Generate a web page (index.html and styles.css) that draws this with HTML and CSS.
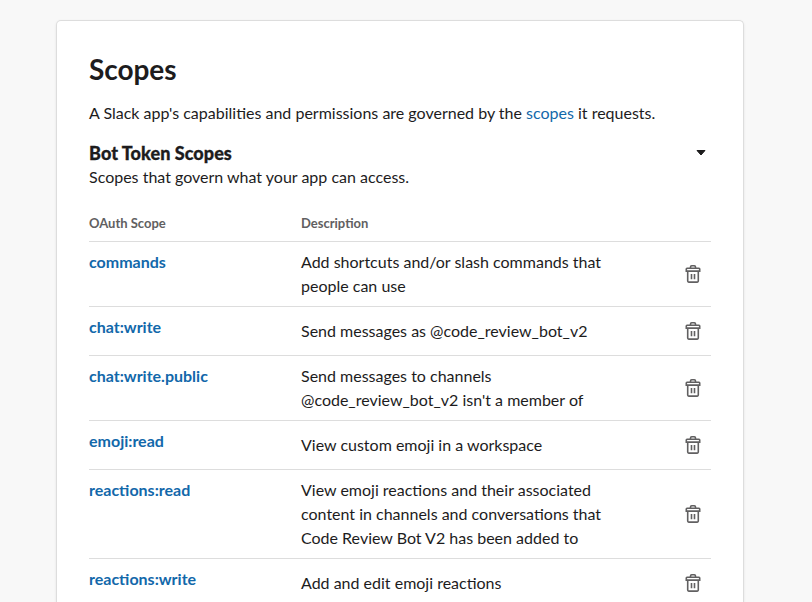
FILE: index.html
```html
<!DOCTYPE html>
<html lang="en">
<head>
<meta charset="utf-8">
<title>Scopes</title>
<link rel="stylesheet" href="styles.css">
</head>
<body>
<svg class="defs" aria-hidden="true"><symbol id="trash" viewBox="0 0 16 18"><path d="M5.5 3V2q0-1.2 1.2-1.2h2.6q1.2 0 1.2 1.2v1M2 3.3h12q.7 0 .7.7v2.1H1.3V4q0-.7.7-.7zM2.7 6.5v9.6q0 1 1 1h8.6q1 0 1-1V6.5M6.5 9v5.2M9.5 9v5.2" fill="none" stroke="#616061" stroke-width="1.6"/></symbol></svg>
<main class="card">
  <h1>Scopes</h1>
  <p class="intro">A Slack app's capabilities and permissions are governed by the <a href="#">scopes</a> it requests.</p>
  <div class="section-head"><h2>Bot Token Scopes</h2><svg class="caret" viewBox="0 0 10 6"><path d="M1 .5h8L5 5z" fill="#1d1c1d" stroke="#1d1c1d" stroke-linejoin="round"/></svg></div>
  <p class="sub">Scopes that govern what your app can access.</p>
  <div class="row head"><span>OAuth Scope</span><span>Description</span></div>
  <div class="row"><a href="#">commands</a><p>Add shortcuts and/or slash commands that people can use</p><svg class="trash"><use href="#trash"/></svg></div>
  <div class="row"><a href="#">chat:write</a><p>Send messages as @code_review_bot_v2</p><svg class="trash"><use href="#trash"/></svg></div>
  <div class="row"><a href="#">chat:write.public</a><p>Send messages to channels @code_review_bot_v2 isn't a member of</p><svg class="trash"><use href="#trash"/></svg></div>
  <div class="row"><a href="#">emoji:read</a><p>View custom emoji in a workspace</p><svg class="trash"><use href="#trash"/></svg></div>
  <div class="row"><a href="#">reactions:read</a><p>View emoji reactions and their associated content in channels and conversations that Code Review Bot V2 has been added to</p><svg class="trash"><use href="#trash"/></svg></div>
  <div class="row"><a href="#">reactions:write</a><p>Add and edit emoji reactions</p><svg class="trash"><use href="#trash"/></svg></div>
</main>
</body>
</html>
```
FILE: styles.css
```css
* { box-sizing: border-box; }
body { margin: 0; height: 602px; padding: 20px 0 0 56px; background: #f8f8f8; color: #1d1c1d; font: 16px/24px Lato, sans-serif; }
h1, h2, p { margin: 0; }
a { color: #1268aa; text-decoration: none; }
.defs { position: absolute; width: 0; height: 0; }
.card { width: 688px; height: 582px; overflow: hidden; padding: 32px 32px 0; background: #fff; border: 1px solid #ddd; border-bottom: 0; border-radius: 5px 5px 0 0; box-shadow: 0 1px 3px rgba(0, 0, 0, .08); }
h1 { font-size: 28px; line-height: 32px; font-weight: 700; letter-spacing: -.05px; }
.intro { margin-top: 16px; }
.section-head { display: flex; justify-content: space-between; align-items: center; margin-top: 16px; height: 24px; padding-right: 5px; }
h2 { font-size: 18px; line-height: 24px; font-weight: 900; letter-spacing: .06px; -webkit-text-stroke: .3px #1d1c1d; }
.caret { width: 10px; height: 6px; }
.row { display: grid; grid-template-columns: 212px 310px 1fr; align-items: center; min-height: 49px; padding: 8px 0; border-top: 1px solid #ddd; }
.row a { font-weight: 700; align-self: start; }
.trash { width: 16px; height: 18px; justify-self: end; margin-right: 10px; }
.head { min-height: 0; height: 36px; margin-top: 16px; padding: 0 0 1px; border: 0; font-size: 13px; font-weight: 700; color: #616061; }
```
